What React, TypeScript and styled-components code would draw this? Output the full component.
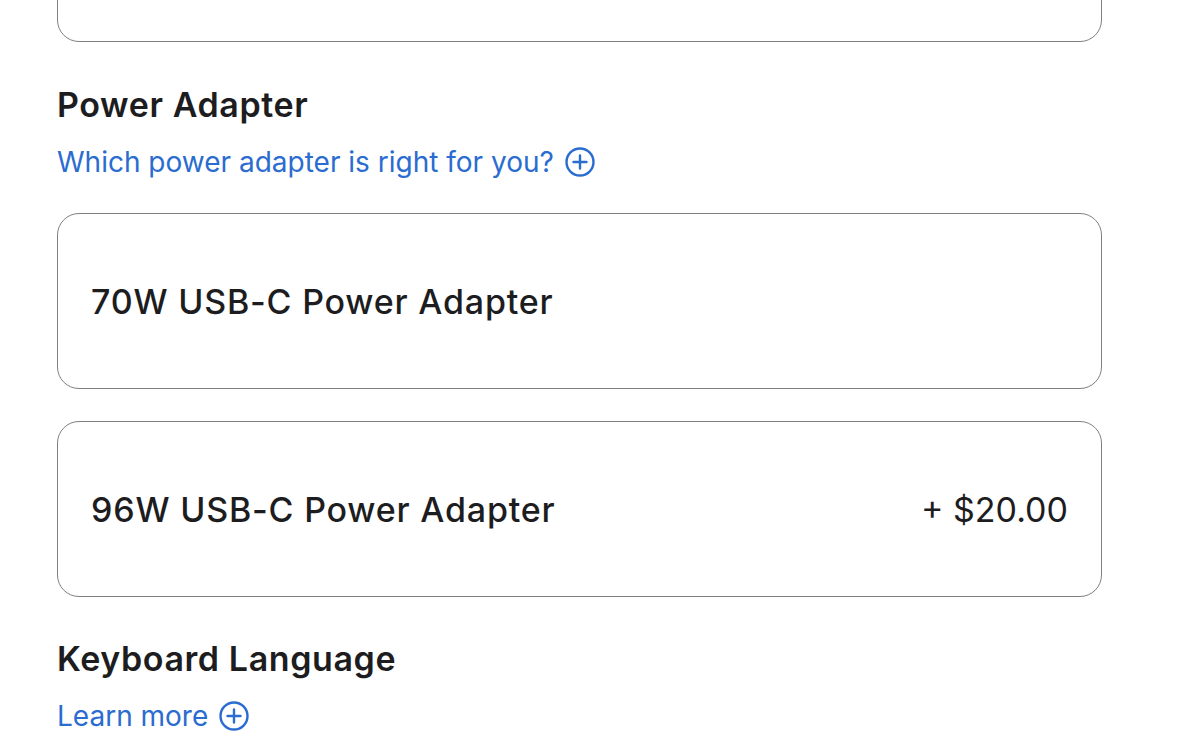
import React from 'react'
import styled, { createGlobalStyle } from 'styled-components'

const GlobalStyle = createGlobalStyle`
  html, body {
    margin: 0;
    padding: 0;
    background: #ffffff;
  }
  body {
    font-family: Inter, "Noto Sans", "Liberation Sans", sans-serif;
    color: #1d1d1f;
    overflow: hidden;
  }
`

const Page = styled.div`
  width: 1045px;
  padding-left: 57px;
  height: 752px;
  overflow: hidden;
`

const Card = styled.div<{ $cut?: boolean }>`
  box-sizing: border-box;
  height: 176px;
  border: 1.6px solid #808084;
  border-radius: 22px;
  padding: 0 33px;
  display: flex;
  align-items: center;
  justify-content: space-between;
  margin-top: ${(p) => (p.$cut ? '-134px' : '0')};
`

const CardList = styled.div`
  display: flex;
  flex-direction: column;
  gap: 32px;
  margin-top: 34px;
`

const Section = styled.section<{ $first?: boolean }>`
  margin-top: ${(p) => (p.$first ? '42px' : '41px')};
`

const Heading = styled.h2`
  margin: 0;
  font-size: 34px;
  line-height: 41px;
  font-weight: 600;
  letter-spacing: 0.6px;
  color: #1d1d1f;
`

const MoreLink = styled.a`
  display: inline-flex;
  align-items: center;
  gap: 11px;
  margin-top: 20px;
  font-size: 28px;
  line-height: 34px;
  font-weight: 400;
  color: #2a6ccf;
  text-decoration: none;
  cursor: pointer;
`

const Name = styled.span`
  font-size: 34px;
  font-weight: 500;
  letter-spacing: 0.8px;
`

const Price = styled.span`
  font-size: 34px;
  font-weight: 400;
`

const PlusCircle = () => (
  <svg width="30" height="30" viewBox="0 0 30 30" fill="none">
    <circle cx="15" cy="15" r="13.5" stroke="#2a6ccf" strokeWidth="2.4" />
    <path d="M15 8.5v13M8.5 15h13" stroke="#2a6ccf" strokeWidth="2.4" strokeLinecap="round" />
  </svg>
)

const adapters = [
  { name: '70W USB-C Power Adapter', price: '' },
  { name: '96W USB-C Power Adapter', price: '+ $20.00' },
]

const App = () => {
  return (
    <Page>
      <GlobalStyle />
      <Card $cut />
      <Section $first>
        <Heading>Power Adapter</Heading>
        <MoreLink>
          Which power adapter is right for you? <PlusCircle />
        </MoreLink>
        <CardList>
          {adapters.map((a) => (
            <Card key={a.name}>
              <Name>{a.name}</Name>
              {a.price && <Price>{a.price}</Price>}
            </Card>
          ))}
        </CardList>
      </Section>
      <Section>
        <Heading>Keyboard Language</Heading>
        <MoreLink>
          Learn more <PlusCircle />
        </MoreLink>
      </Section>
    </Page>
  )
}

export default App
